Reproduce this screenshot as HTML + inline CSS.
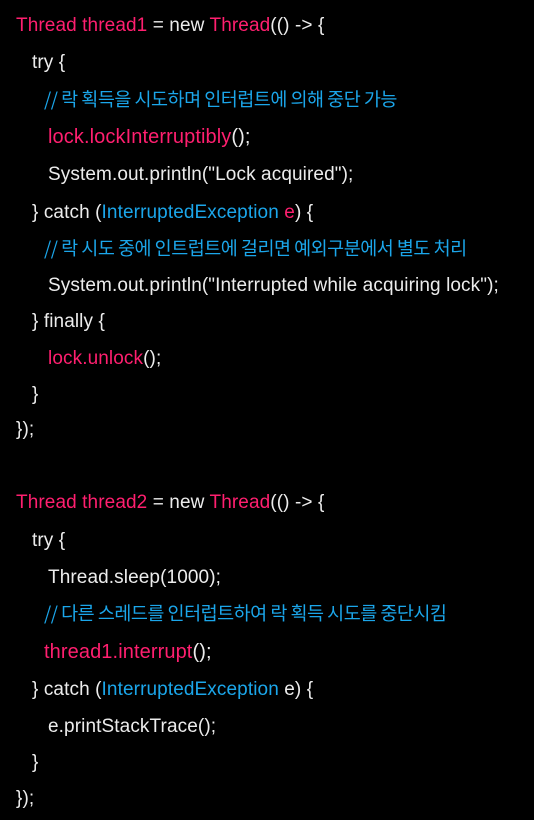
<!DOCTYPE html>
<html><head><meta charset="utf-8"><style>
html,body{margin:0;padding:0;background:#000;}
body{width:534px;height:820px;position:relative;overflow:hidden;font-family:"Liberation Sans","Noto Sans CJK KR",sans-serif;font-size:19px;color:#ececec;}
.l{position:absolute;white-space:pre;line-height:24px;letter-spacing:0.1px;margin-top:2px;}
.p{color:#ff1f6f}.b{color:#1ba6ea}
.k{font-family:"Noto Sans CJK KR","Liberation Sans",sans-serif;font-size:18.5px;letter-spacing:-0.5px;}
</style></head><body>
<div class="l" style="left:16px;top:12px"><span class="p">Thread thread1</span> = new <span class="p">Thread</span>(() -&gt; {</div>
<div class="l" style="left:32px;top:49px">try {</div>
<div class="l b k" style="left:44px;top:85px">// 락 획득을 시도하며 인터럽트에 의해 중단 가능</div>
<div class="l" style="left:48px;top:123px;font-size:20px"><span class="p">lock.lockInterruptibly</span>();</div>
<div class="l" style="left:48px;top:161px">System.out.println("Lock acquired");</div>
<div class="l" style="left:32px;top:199px">} catch (<span class="b">InterruptedException</span> <span class="p">e</span>) {</div>
<div class="l b k" style="left:44px;top:234px">// 락 시도 중에 인트럽트에 걸리면 예외구분에서 별도 처리</div>
<div class="l" style="left:48px;top:272px">System.out.println("Interrupted while acquiring lock");</div>
<div class="l" style="left:32px;top:308px">} finally {</div>
<div class="l" style="left:48px;top:345px"><span class="p">lock.unlock</span>();</div>
<div class="l" style="left:32px;top:381px">}</div>
<div class="l" style="left:16px;top:416px">});</div>
<div class="l" style="left:16px;top:489px"><span class="p">Thread thread2</span> = new <span class="p">Thread</span>(() -&gt; {</div>
<div class="l" style="left:32px;top:527px">try {</div>
<div class="l" style="left:48px;top:564px">Thread.sleep(1000);</div>
<div class="l b k" style="left:44px;top:599px">// 다른 스레드를 인터럽트하여 락 획득 시도를 중단시킴</div>
<div class="l" style="left:44px;top:638px;font-size:20px"><span class="p">thread1.interrupt</span>();</div>
<div class="l" style="left:32px;top:676px">} catch (<span class="b">InterruptedException</span> e) {</div>
<div class="l" style="left:48px;top:713px">e.printStackTrace();</div>
<div class="l" style="left:32px;top:749px">}</div>
<div class="l" style="left:16px;top:785px">});</div>
</body></html>
